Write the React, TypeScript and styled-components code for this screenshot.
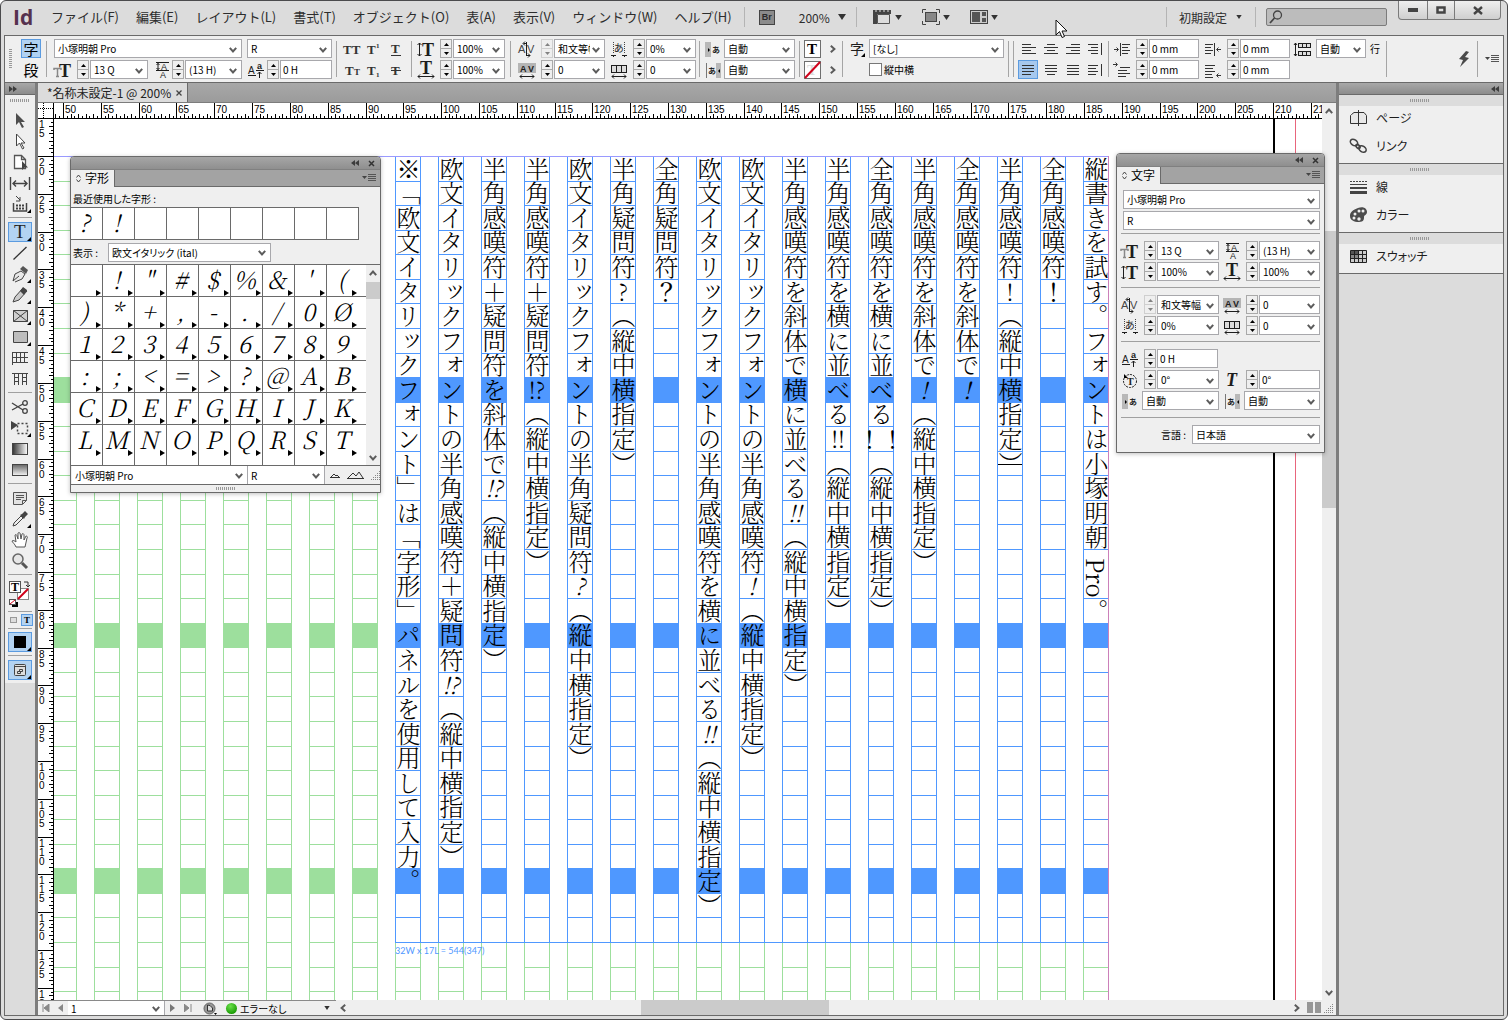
import React from "react";
import styled, { createGlobalStyle, css } from "styled-components";

const ui = `"Noto Sans CJK JP", "Liberation Sans", sans-serif`;
const mincho = `"Noto Serif CJK JP", "Noto Sans CJK JP", serif`;
const serif = `"Liberation Serif", serif`;
const sans = `"Liberation Sans", sans-serif`;
const line = "#6a6a6a";
const face = "#efefef";
const frame = "#dcdcdc";
const blue = "#4f98ff";
const green = "#9ddf9d";

const Global = createGlobalStyle`
  *, *::before, *::after { box-sizing: border-box; }
  html, body { margin: 0; background: #fff; }
  body { font-family: ${ui}; font-size: 10px; color: #000; font-feature-settings: "palt"; overflow: hidden; }
  button, input, select { font: inherit; font-feature-settings: inherit; color: inherit; margin: 0; padding: 0; border: 0; border-radius: 0; background: none; }
  svg { display: block; flex: none; }
`;

/* ---------- window shell ---------- */
const Shell = styled.div`
  position: relative;
  display: flex;
  flex-direction: column;
  height: 100vh;
  border: 1px solid #4b4b4d;
  border-radius: 6px;
  background: ${frame};
  overflow: hidden;
`;
const Work = styled.div`
  flex: 1;
  min-height: 0;
  margin: 0 3px 3px;
  border: 1px solid ${line};
  display: flex;
  flex-direction: column;
`;
const Main = styled.main`
  flex: 1;
  min-height: 0;
  display: flex;
`;
const Splitter = styled.div`
  width: 3px;
  background: #7d7d7d;
`;
const Pointer = styled.svg`
  position: absolute;
  left: 1054px;
  top: 18px;
  z-index: 5;
`;

/* ---------- menu bar ---------- */
const MenuBar = styled.header`
  flex: none;
  display: flex;
  align-items: center;
  height: 34px;
  padding: 0 6px 2px 12px;
  color: #2d2d2d;
`;
const Logo = styled.div`
  width: 38px;
  font: bold 21px/24px "Open Sans", "Liberation Sans", sans-serif;
  color: #56314f;
`;
const Menus = styled.nav`
  display: flex;
  gap: 17px;
`;
const MenuItem = styled.button`
  font-size: 13px;
  line-height: 20px;
  font-feature-settings: normal;
  white-space: nowrap;
`;
const BarLine = styled.span<{ $l: number; $r: number }>`
  width: 1px;
  height: 20px;
  margin: 0 ${(p) => p.$r}px 0 ${(p) => p.$l}px;
  background: #b4b4b4;
`;
const Bridge = styled.button`
  width: 16px;
  height: 15px;
  border: 1px solid #444;
  background: #8b8b8b;
  font: bold 9px/12px ${sans};
  color: #2b2b2b;
`;
const BarButton = styled.button<{ $ml?: number }>`
  display: flex;
  align-items: center;
  gap: 3px;
  margin-left: ${(p) => p.$ml ?? 0}px;
  white-space: nowrap;
`;
const ZoomButton = styled(BarButton)`
  gap: 8px;
  font-size: 12px;
`;
const WorkspaceButton = styled(BarButton)`
  gap: 9px;
  font-size: 12px;
`;
const Spring = styled.span`
  flex: 1;
`;
const Search = styled.label`
  display: flex;
  align-items: center;
  width: 121px;
  height: 18px;
  padding-left: 2px;
  border: 1px solid #7c7c7c;
  border-radius: 2px;
  background: #bcbcbc;
  input {
    flex: 1;
    min-width: 0;
    outline: 0;
  }
`;
const Caption = styled.div`
  align-self: flex-start;
  display: flex;
  height: 19px;
  margin-left: 11px;
  border: 1px solid #7a7a7a;
  border-top: 0;
  border-radius: 0 0 4px 4px;
  background: linear-gradient(#efefef, #cfcfcf);
`;
const CaptionButton = styled.button<{ $w: number }>`
  width: ${(p) => p.$w}px;
  display: grid;
  place-items: center;
  & + & {
    border-left: 1px solid #7a7a7a;
  }
`;

/* ---------- control bar ---------- */
const ControlBar = styled.section`
  flex: none;
  display: flex;
  align-items: flex-start;
  height: 47px;
  padding: 3px 3px 0 4px;
  background: ${face};
  border-bottom: 1px solid ${line};
`;
const Stack = styled.div`
  display: flex;
  flex-direction: column;
  gap: 2px;
`;
const Row = styled.div<{ $gap?: number }>`
  display: flex;
  align-items: center;
  height: 19px;
  gap: ${(p) => p.$gap ?? 0}px;
`;
const Rule = styled.span<{ $l: number; $r: number }>`
  flex: none;
  width: 1px;
  height: 36px;
  margin: 2px ${(p) => p.$r}px 0 ${(p) => p.$l}px;
  background: #a5a5a5;
`;
const DotsV = styled.span`
  width: 3px;
  height: 20px;
  margin: 10px 9px 0 0;
  background: repeating-linear-gradient(#999 0 1px, transparent 1px 2px);
`;
const ModeButton = styled.button<{ $on?: boolean }>`
  width: 20px;
  height: 19px;
  font-size: 15px;
  line-height: 16px;
  border: 1px solid ${(p) => (p.$on ? "#5b9be0" : "transparent")};
  background: ${(p) => (p.$on ? "#b1d1f1" : "none")};
`;
const Toggle = styled.button<{ $on?: boolean }>`
  width: 22px;
  height: 19px;
  display: grid;
  place-items: center;
  color: #333;
  ${(p) =>
    p.$on &&
    css`
      width: 20px;
      margin-right: 2px;
      outline: 1px solid #5b9be0;
      outline-offset: -1px;
      background: #a6c8ee;
    `}
`;
const Swatch = styled.button`
  width: 17px;
  height: 18px;
  border: 1px solid #6f6f6f;
  background: #fff;
  display: grid;
  place-items: center;
`;
const Check = styled.label`
  display: flex;
  align-items: center;
  height: 19px;
  gap: 2px;
  input {
    appearance: none;
    width: 13px;
    height: 13px;
    border: 1px solid #777;
    background: #fff;
  }
`;
const MenuToggle = styled.button`
  height: 16px;
  margin-top: 12px;
`;

/* ---------- fields ---------- */
const Slot = styled.span<{ $w: number }>`
  width: ${(p) => p.$w}px;
  height: 19px;
  display: grid;
  place-items: center;
  flex: none;
`;
const SpinBox = styled.span<{ $dim?: boolean }>`
  display: flex;
  flex-direction: column;
  width: 12px;
  height: 19px;
  margin: 0 1px 0 5px;
  border: 1px solid #a9a9a9;
  opacity: ${(p) => (p.$dim ? 0.45 : 1)};
  button {
    flex: 1;
    display: grid;
    place-items: center;
  }
  button + button {
    border-top: 1px solid #a9a9a9;
  }
`;
const ComboBox = styled.span<{ $w?: number; $bare?: boolean }>`
  position: relative;
  display: block;
  flex: ${(p) => (p.$w ? "none" : 1)};
  width: ${(p) => (p.$w ? p.$w + "px" : "auto")};
  height: ${(p) => (p.$bare ? "100%" : "19px")};
  border: solid #a8a8ac;
  border-width: ${(p) => (p.$bare ? "0 1px 0 0" : "1px")};
  background: #fff;
  select {
    display: block;
    appearance: none;
    width: 100%;
    height: 100%;
    padding: 0 14px 0 3px;
    outline: 0;
    text-overflow: clip;
  }
  svg {
    position: absolute;
    right: 4px;
    top: calc(50% - 2px);
    pointer-events: none;
  }
`;
const TextBox = styled.input<{ $w: number }>`
  &&& {
    width: ${(p) => p.$w}px;
    height: 19px;
    padding: 0 2px;
    outline: 0;
    border: 1px solid #a8a8ac;
    background: #fff;
  }
`;
const MarkBox = styled.svg`
  overflow: visible;
`;

const Chevron = ({ rot = 0 }: { rot?: number }) => (
  <svg width="8" height="6" viewBox="0 0 8 6" style={rot ? { transform: `rotate(${rot}deg)` } : undefined}>
    <path d="M.8.8 4 4.4 7.2.8" fill="none" stroke="#5c5c5c" strokeWidth="2" />
  </svg>
);
const Down = ({ s = 8 }: { s?: number }) => (
  <svg width={s} height={s - 2} viewBox="0 0 8 6">
    <path d="M0 0h8L4 6z" fill="#333" />
  </svg>
);
const Spin = ({ label, dim }: { label: string; dim?: boolean }) => (
  <SpinBox $dim={dim}>
    <button aria-label={`${label} +`}>
      <svg width="5" height="3"><path d="M0 3h5L2.500 0z" /></svg>
    </button>
    <button aria-label={`${label} -`}>
      <svg width="5" height="3"><path d="M0 0h5L2.500 3z" /></svg>
    </button>
  </SpinBox>
);
const Combo = ({ label, value, w, bare }: { label: string; value: string; w?: number; bare?: boolean }) => (
  <ComboBox $w={w} $bare={bare}>
    <select aria-label={label} defaultValue={value}>
      <option>{value}</option>
    </select>
    <Chevron />
  </ComboBox>
);

/* ---------- field icons ---------- */
const T = ({ x, y, s, c = "#1d1d1d", t = "T", w = "bold", f = serif, i }: any) => (
  <text x={x} y={y} fontSize={s} fill={c} fontWeight={w} fontFamily={f} fontStyle={i ? "italic" : undefined}>
    {t}
  </text>
);
const k = "#1d1d1d";
const marks: Record<string, React.ReactNode> = {
  size: (<><path d="M0 9V7.500h7V9M3.500 8v7M2 15.500h3" stroke="#888" strokeWidth="1.500" fill="none" /><T x={5} y={16} s={18} /></>),
  leading: (<><path d="M3 1.500h13M3 9.500h13" stroke={k} /><path d="M5 2v7M3.500 4 5 2.500 6.500 4M3.500 7 5 8.500 6.500 7" stroke={k} fill="none" /><T x={8} y={9} s={9} t="A" f={sans} w="normal" /><T x={7} y={17} s={9} t="A" f={sans} w="normal" /></>),
  baseline: (<><T x={1} y={13} s={10} t="A" f={sans} w="normal" /><T x={10} y={8} s={9} t="a" f={sans} /><path d="M1 14.500h8M9 9.500h8M12.500 17v-6M10.500 13l2-2 2 2" stroke={k} fill="none" /></>),
  vscale: (<><path d="M2.500 3v13M.5 5l2-2 2 2M.5 14l2 2 2-2" stroke={k} fill="none" /><T x={5} y={16} s={18} /></>),
  hscale: (<><T x={3} y={13} s={18} /><path d="M1 15.500h16M3 13.500l-2 2 2 2M15 13.500l2 2-2 2" stroke={k} fill="none" /></>),
  kern: (<><T x={0} y={13} s={11} f={sans} t="A" w="normal" c="#444" /><T x={9} y={13} s={11} f={sans} w="normal" c="#444" t="V" /><path d="M8.500 2v13M5.500 3.500h3M7 1.500l-2 2 2 2M8 15.500h4M10 13.500l2 2-2 2" stroke={k} fill="none" /></>),
  track: (<><rect x="0" y="2" width="18" height="10" fill="#b5b5b5" /><T x={2} y={11} s={9} t="A" f={sans} /><T x={10} y={11} s={9} f={sans} t="V" /><path d="M2 15.500h14M4 13.500l-2 2 2 2M14 13.500l2 2-2 2" stroke={k} fill="none" /></>),
  tsume: (<><path d="M3.500 2v12M14.500 2v12" stroke="#444" strokeDasharray="1 1" /><T x={4} y={12} s={10} t="あ" f={ui} w="normal" /><path d="M1 15.500h5M12 15.500h5M3 17l2-2M15 17l-2-2" stroke={k} /></>),
  aki: (<><rect x="1.500" y="4.500" width="15" height="7" fill="#ddd" stroke={k} /><path d="M6.500 4v7M11.500 4v7" stroke={k} /><path d="M2 15.500h14M4 13.500l-2 2 2 2M14 13.500l2 2-2 2" stroke={k} fill="none" /></>),
  before: (<><rect x="1" y="2" width="6" height="15" fill="#b8b8b8" /><path d="M4 8v4l2-2z" /><T x={8} y={13} s={8} t="あ" f={ui} /></>),
  after: (<><path d="M2.500 2v15" stroke="#777" /><rect x="12" y="2" width="5" height="15" fill="#b8b8b8" /><path d="M16 8v4l-2-2z" /><T x={4} y={13} s={8} t="あ" f={ui} /></>),
  rotate: (<><circle cx="9" cy="10" r="6.500" fill="none" stroke={k} strokeDasharray="2 1" /><T x={6} y={14} s={10} /><path d="M3 3v4h4z" /></>),
  skew: <T x={3} y={15} s={18} i />,
  indL: <path d="M1 9.500h4M3.500 7.500l2 2-2 2M7.500 3v13M9 4.500h8M9 7.500h6M9 10.500h8M9 13.500h6" stroke="#333" fill="none" />,
  indF: <path d="M0 3.500h4M2.500 1.500l2 2-2 2M7 6.500h10M5 9.500h9M5 12.500h12M5 15.500h8" stroke="#333" fill="none" />,
  indR: <path d="M17 9.500h-4M14.500 7.500l-2 2 2 2M10.500 3v13M1 4.500h8M1 7.500h6M1 10.500h8M1 13.500h6" stroke="#333" fill="none" />,
  indE: <path d="M17 14.500h-4M14.500 12.500l-2 2 2 2M1 4.500h10M1 7.500h8M1 10.500h10M1 13.500h7M1 16.500h8" stroke="#333" fill="none" />,
  lines: (<><rect x="4.500" y="3.500" width="12" height="4" fill="#ddd" stroke={k} /><rect x="4.500" y="11.500" width="12" height="4" fill="#ddd" stroke={k} /><path d="M8.500 3v5M12.500 3v5M8.500 11v5M12.500 11v5M1.500 3v13M0 5l1.500-2L3 5M0 14l1.500 2L3 14" stroke={k} fill="none" /></>),
};
const Mark = ({ n }: { n: string }) => (
  <MarkBox width="18" height="18" viewBox="0 0 18 18">{marks[n]}</MarkBox>
);
type FieldProps = { icon: string; label: string; value: string; w: number; iw?: number; plain?: boolean; dim?: boolean };
const Field = ({ icon, label, value, w, iw = 18, plain, dim }: FieldProps) => (
  <Row>
    <Slot $w={iw}><Mark n={icon} /></Slot>
    <Spin label={label} dim={dim} />
    {plain ? <TextBox $w={w} aria-label={label} defaultValue={value} /> : <Combo w={w} label={label} value={value} />}
  </Row>
);

const caseIcons: [string, React.ReactNode][] = [
  ["オールキャップス", <T x={0} y={14} s={13} c="#333" t="TT" />],
  ["上付き", <><T x={2} y={14} s={13} c="#333" /><T x={11} y={8} s={7} c="#333" t="1" /></>],
  ["下線", <><T x={4} y={13} s={13} c="#333" /><path d="M4 15.500h10" stroke="#333" /></>],
  ["スモールキャップス", <><T x={2} y={14} s={13} c="#333" /><T x={11} y={14} s={9} c="#333" /></>],
  ["下付き", <><T x={2} y={14} s={13} c="#333" /><T x={11} y={16} s={7} c="#333" t="1" /></>],
  ["打ち消し線", <><T x={4} y={14} s={13} c="#333" /><path d="M4 9.500h10" stroke="#333" /></>],
];
const alignRows = [
  ["M2 4.500h9M2 7.500h14M2 10.500h9M2 13.500h14", "M5 4.500h8M2 7.500h14M5 10.500h8M2 13.500h14", "M7 4.500h9M2 7.500h14M7 10.500h9M2 13.500h14", "M2 4.500h10M5 7.500h7M2 10.500h10M5 13.500h7M15.500 3v12"],
  ["M3 4.500h12M3 7.500h12M3 10.500h12M3 13.500h9", "M3 4.500h12M3 7.500h12M3 10.500h12M5 13.500h8", "M3 4.500h12M3 7.500h12M3 10.500h12M3 13.500h12", "M2 4.500h10M2 7.500h8M2 10.500h10M2 13.500h8M15.500 3v12"],
];
const BurgerIcon = () => (
  <svg width="15" height="10" viewBox="0 0 15 10">
    <path d="M0 3h5L2.500 6z" fill="#444" />
    <path d="M6 1.500h8M6 3.500h8M6 5.500h8M6 7.500h8" stroke="#555" />
  </svg>
);

const Controls = () => (
  <ControlBar>
    <DotsV />
    <Stack>
      <ModeButton $on>字</ModeButton>
      <ModeButton>段</ModeButton>
    </Stack>
    <Rule $l={5} $r={7} />
    <Stack>
      <Row $gap={5}>
        <Combo w={188} label="フォント" value="小塚明朝 Pro" />
        <Combo w={85} label="スタイル" value="R" />
      </Row>
      <Row $gap={5}>
        <Field icon="size" label="フォントサイズ" value="13 Q" w={58} />
        <Field icon="leading" iw={14} label="行送り" value="(13 H)" w={57} />
        <Field icon="baseline" iw={15} label="ベースライン" value="0 H" w={52} plain />
      </Row>
    </Stack>
    <Rule $l={4} $r={4} />
    <Stack>
      {[0, 3].map((s) => (
        <Row key={s}>
          {caseIcons.slice(s, s + 3).map(([name, art]) => (
            <Toggle key={name} aria-label={name}><MarkBox width="18" height="18" viewBox="0 0 18 18">{art}</MarkBox></Toggle>
          ))}
        </Row>
      ))}
    </Stack>
    <Rule $l={4} $r={5} />
    <Stack>
      <Field icon="vscale" label="垂直比率" value="100%" w={52} />
      <Field icon="hscale" label="水平比率" value="100%" w={52} />
    </Stack>
    <Rule $l={5} $r={7} />
    <Stack>
      <Field icon="kern" label="カーニング" value="和文等幅" w={51} dim />
      <Field icon="track" label="トラッキング" value="0" w={51} />
    </Stack>
    <Slot $w={5} />
    <Stack>
      <Field icon="tsume" label="文字ツメ" value="0%" w={50} />
      <Field icon="aki" label="字取り" value="0" w={50} />
    </Stack>
    <Rule $l={3} $r={4} />
    <Stack>
      <Row $gap={2}><Mark n="before" /><Combo w={71} label="文字前のアキ" value="自動" /></Row>
      <Row $gap={2}><Mark n="after" /><Combo w={71} label="文字後のアキ" value="自動" /></Row>
    </Stack>
    <Rule $l={4} $r={4} />
    <Stack>
      <Row $gap={8}>
        <Swatch aria-label="塗り"><MarkBox width="15" height="16"><T x={2} y={13} s={15} c="#000" /></MarkBox></Swatch>
        <Chevron rot={-90} />
      </Row>
      <Row $gap={8}>
        <Swatch aria-label="線"><MarkBox width="15" height="16"><T x={2} y={13} s={15} c="#ddd" /><path d="M0 16 15 0" stroke="#d0021b" strokeWidth="2" /></MarkBox></Swatch>
        <Chevron rot={-90} />
      </Row>
    </Stack>
    <Rule $l={5} $r={6} />
    <Stack>
      <Row $gap={2}>
        <MarkBox width="18" height="18"><T x={1} y={14} s={14} t="字" f={ui} w="normal" /><path d="M16 13v4h-4z" /></MarkBox>
        <Combo w={135} label="文字スタイル" value="[なし]" />
      </Row>
      <Row>
        <Slot $w={20} />
        <Check><input type="checkbox" />縦中横</Check>
      </Row>
    </Stack>
    <Rule $l={4} $r={4} />
    <Rule $l={0} $r={4} />
    <Stack>
      {alignRows.map((row, r) => (
        <Row key={r}>
          {row.map((d, i) => (
            <Toggle key={i} $on={r === 1 && i === 0} aria-label={`行揃え ${r * 4 + i + 1}`}>
              <svg width="18" height="18"><path d={d} stroke="#333" /></svg>
            </Toggle>
          ))}
        </Row>
      ))}
    </Stack>
    <Rule $l={2} $r={4} />
    <Stack>
      <Field icon="indL" label="左インデント" value="0 mm" w={50} plain />
      <Field icon="indF" label="1行目インデント" value="0 mm" w={50} plain />
    </Stack>
    <Slot $w={5} />
    <Stack>
      <Field icon="indR" label="右インデント" value="0 mm" w={50} plain />
      <Field icon="indE" label="最終行インデント" value="0 mm" w={50} plain />
    </Stack>
    <Slot $w={4} />
    <Row $gap={4}>
      <Mark n="lines" />
      <Combo w={50} label="行取り" value="自動" />
      行
    </Row>
    <Rule $l={6} $r={0} />
    <Spring />
    <MenuToggle aria-label="クイック適用">
      <svg width="12" height="16"><path d="M8 0 1 8l4 1-3 7 9-9-4-1 4-5z" fill="#4a4a4a" /></svg>
    </MenuToggle>
    <Rule $l={7} $r={7} />
    <MenuToggle aria-label="パネルメニュー"><BurgerIcon /></MenuToggle>
  </ControlBar>
);

/* ---------- toolbox ---------- */
const ToolBox = styled.aside`
  width: 30px;
  display: flex;
  flex-direction: column;
  background: ${frame};
`;
const DockHead = styled.div<{ $end?: boolean }>`
  flex: none;
  display: flex;
  align-items: center;
  justify-content: ${(p) => (p.$end ? "flex-end" : "flex-start")};
  height: 12px;
  padding: 0 4px;
  background: linear-gradient(#a8a8a8, #8c8c8c);
  border-bottom: 1px solid ${line};
`;
const Dots = styled.span<{ $v?: number }>`
  display: block;
  flex: none;
  width: 20px;
  height: 3px;
  margin: ${(p) => p.$v ?? 4}px auto;
  background: repeating-linear-gradient(90deg, #999 0 1px, transparent 1px 2px);
`;
const ToolGrip = styled.div`
  height: 14px;
`;
const Tools = styled.div`
  display: flex;
  flex-direction: column;
  align-items: center;
  gap: 1px;
  padding-bottom: 3px;
  background: ${face};
`;
const Tool = styled.button<{ $on?: boolean }>`
  width: 24px;
  height: 20px;
  display: grid;
  place-items: center;
  ${(p) =>
    p.$on &&
    css`
      outline: 1px solid #5b9be0;
      outline-offset: -1px;
      background: #b3d3f2;
    `}
`;
const ToolLine = styled.hr<{ $tight?: boolean }>`
  width: 24px;
  height: 1px;
  margin: 2px 0 ${(p) => (p.$tight ? 2 : 3)}px;
  border: 0;
  background: #a0a0a0;
`;
const MiniTools = styled.div`
  display: flex;
  gap: 4px;
  height: 10px;
  align-items: center;
`;
const MiniTool = styled.button<{ $on?: boolean }>`
  width: 10px;
  height: 10px;
  display: grid;
  place-items: center;
  font: bold 9px/9px ${serif};
  outline: ${(p) => (p.$on ? "1px solid #5b9be0" : "none")};
  background: ${(p) => (p.$on ? "#b3d3f2" : "none")};
`;
const g = "#555";
const corner = <path d="M23 15v4h-4z" fill="#000" />;
const tools: [string, React.ReactNode][] = [
  ["選択", <path d="M8 3v12l3-3 3 6 2-1-3-5h4z" fill="#4e4e4e" />],
  ["ダイレクト選択", <path d="M8.500 3v12l3-3 3 6 1.500-1-3-5h4z" fill="#fff" stroke="#444" />],
  ["ページ", <><path d="M6.500 3.500h7l4 4v9h-11zM13.500 3.500v4h4" fill="#fff" stroke={g} strokeWidth="1.300" /><path d="M14 9v9l2.500-2.500H20z" fill="#444" /></>],
  ["間隔", <path d="M2.500 4v13M21.500 4v13M5 10.500h14M8 7.500l-3 3 3 3M16 7.500l3 3-3 3" fill="none" stroke="#444" strokeWidth="1.400" />],
  ["コンテンツ収集", <><path d="M5.500 9v8h13V9" fill="none" stroke="#444" strokeWidth="1.500" /><path d="M8 11.500h9M8 14.500h9" stroke="#444" strokeDasharray="2 1" strokeWidth="2" /><path d="M8 2l4 4M12 3v4H8" stroke="#444" fill="none" />{corner}</>],
  ["-", null],
  ["文字", <><T x={6} y={16} s={19} w="normal" c="#222" />{corner}</>],
  ["線", <path d="M5.500 16.500 18.500 4" stroke="#333" strokeWidth="1.300" />],
  ["ペン", <><path d="M5 17l2-7 6-3 4 3-3 5-7 3M5 17l6-5" fill="#e8e8e8" stroke="#444" /><path d="m12 5 3-3 5 4-2 4z" fill="#555" />{corner}</>],
  ["鉛筆", <><path d="m5 17 2-5 8-9 4 3-8 9z" fill="#ccc" stroke="#444" /><path d="m12 6 3-4 4 3-3 5z" fill="#444" />{corner}</>],
  ["長方形フレーム", <><path d="M5.500 4.500h14v11h-14zM5.500 4.500l14 11M19.500 4.500l-14 11" fill="#d0d0d0" stroke="#444" />{corner}</>],
  ["長方形", <><path d="M5.500 4.500h14v11h-14z" fill="#bdbdbd" stroke="#444" />{corner}</>],
  ["横組みグリッド", <><path d="M5 4.500h15M5 9.500h15M5 14.500h15" stroke="#444" strokeWidth="1.200" /><path d="M4.500 4v13M8.500 5v4M12.500 5v4M16.500 5v4M8.500 10v4M12.500 10v4M16.500 10v4" stroke="#444" /></>],
  ["縦組みグリッド", <path d="M4 4.500h16M6.500 8.500h4M14.500 8.500h4M6.500 12.500h4M14.500 12.500h4M6.500 5v11M10.500 5v11M14.500 5v11M18.500 5v11" stroke="#444" fill="none" />],
  ["-", null],
  ["はさみ", <><circle cx="17" cy="6" r="2.300" fill="none" stroke="#444" strokeWidth="1.300" /><circle cx="17" cy="14" r="2.300" fill="none" stroke="#444" strokeWidth="1.300" /><path d="M4 6l11 7M4 13l11-6" stroke="#444" strokeWidth="1.400" /></>],
  ["自由変形", <><path d="M3 3v9l7-5z" fill="#444" /><path d="M9.500 5.500h10v10h-10z" fill="none" stroke="#444" strokeDasharray="2 2" strokeWidth="1.500" />{corner}</>],
  ["グラデーション", <rect x="4.500" y="4.500" width="15" height="11" fill="url(#toolRamp)" stroke="#444" />],
  ["ぼかし", <rect x="4.500" y="4.500" width="15" height="11" fill="url(#toolFade)" stroke="#444" />],
  ["-", null],
  ["注釈", <path d="M5.500 4.500h13v8l-4 4h-9zM8 7.500h8M8 9.500h8M8 11.500h5M14.500 16v-3.500h4" fill="#e2e2e2" stroke="#555" />],
  ["スポイト", <><path d="m5 17 1-3 7-7 2 2-7 7z" fill="#eee" stroke="#444" /><path d="m12 6 2-1 3-3 3 3-3 3-1 2z" fill="#444" />{corner}</>],
  ["手のひら", <path d="M8 17c-1-3-4-5-4-6 1-1 3 0 4 1L7 5c1-1 2 0 2 1l1 3V3c1-1 2 0 2 0l1 6 1-5c1-1 2 0 2 1v5l2-4c1 0 2 1 1 2l-2 9z" fill="#fff" stroke="#555" />],
  ["ズーム", <><circle cx="10" cy="8" r="5" fill="#e6e6e6" stroke="#666" strokeWidth="1.500" /><path d="m14 12 5 5" stroke="#555" strokeWidth="3" /></>],
  ["-", null],
];
const Rewind = ({ flip }: { flip?: boolean }) => (
  <svg width="8" height="6" viewBox="0 0 8 6">
    <path d={flip ? "M0 0l4 3-4 3zM4 0l4 3-4 3z" : "M4 0v6L0 3zM8 0v6L4 3z"} fill="#3c3c3c" />
  </svg>
);
const Toolbox = () => (
  <ToolBox>
    <DockHead><Rewind flip /></DockHead>
    <Tools>
      <ToolGrip><Dots /></ToolGrip>
      {tools.map(([name, art], i) =>
        art ? (
          <Tool key={i} aria-label={name} $on={name === "文字"}>
            <MarkBox width="24" height="20">
              {name === "グラデーション" && (
                <defs>
                  <linearGradient id="toolRamp"><stop stopColor="#333" /><stop offset="1" stopColor="#fff" /></linearGradient>
                  <linearGradient id="toolFade" x2="0" y2="1"><stop stopColor="#666" /><stop offset="1" stopColor="#f4f4f4" /></linearGradient>
                </defs>
              )}
              {art}
            </MarkBox>
          </Tool>
        ) : (
          <ToolLine key={i} />
        )
      )}
      <svg width="24" height="29" viewBox="0 -1 24 29">
        <rect x="9.500" y="8.500" width="11" height="11" fill="#fff" stroke="#888" />
        <path d="m10 19 10-10" stroke="#d0021b" strokeWidth="2" />
        <rect x="1.500" y="1.500" width="11" height="11" fill="#fff" stroke="#555" />
        <T x={3} y={11} s={12} c="#000" />
        <path d="M16 2h4v4M18 5l2 2 2-2" fill="none" stroke="#333" />
        <rect x="4" y="22" width="6" height="5" /><rect x="1.500" y="19.500" width="6" height="5" fill="#fff" stroke="#555" />
        <path d="m2 24 5-4" stroke="#d0021b" />
      </svg>
      <ToolLine $tight />
      <MiniTools>
        <MiniTool aria-label="オブジェクトに適用"><svg width="7" height="6"><rect x=".5" y=".5" width="6" height="5" fill="#ddd" stroke="#999" /></svg></MiniTool>
        <MiniTool $on>T</MiniTool>
      </MiniTools>
      <ToolLine $tight />
      <Tool $on aria-label="カラーを適用"><svg width="24" height="20"><rect x="6" y="4" width="12" height="12" />{corner}</svg></Tool>
      <ToolLine />
      <Tool $on aria-label="表示モード"><svg width="24" height="20"><rect x="6.500" y="4.500" width="11" height="11" rx="1" fill="#ddd" stroke="#444" /><path d="M7 6.500h10M9.500 11.500h3v2h-3zM11.500 9.500h3v2h-3z" stroke="#444" fill="none" />{corner}</svg></Tool>
    </Tools>
  </ToolBox>
);

/* ---------- document area ---------- */
const Doc = styled.section`
  flex: 1;
  min-width: 0;
  display: flex;
  flex-direction: column;
`;
const Tabs = styled.div`
  flex: none;
  height: 20px;
  display: flex;
  background: linear-gradient(#a8a8a8, #9b9b9b);
  border-bottom: 1px solid #7c7c7c;
`;
const DocTab = styled.div`
  display: flex;
  align-items: center;
  gap: 5px;
  padding: 0 5px 0 9px;
  font-size: 12px;
  line-height: 19px;
  color: #222;
  background: ${frame};
  border-right: 1px solid ${line};
`;
const Sheet = styled.div`
  flex: 1;
  min-height: 0;
  display: grid;
  grid-template: 16px minmax(0, 1fr) / 16px minmax(0, 1fr) 14px;
`;
const Origin = styled.div`
  border-right: 1px solid #000;
  border-bottom: 1px solid #000;
  background: #fff;
`;
const RulerX = styled.svg`
  width: 100%;
  height: 16px;
  background: #fff;
  border-bottom: 1px solid #000;
`;
const RulerY = styled.svg`
  width: 16px;
  height: 100%;
  background: #fff;
  border-right: 1px solid #000;
`;
const Pasteboard = styled.div`
  position: relative;
  overflow: hidden;
  background: #fff;
`;
const GuideX = styled.i<{ $x: number; $w?: number; $c: string; $top?: number }>`
  position: absolute;
  left: ${(p) => p.$x}px;
  top: ${(p) => p.$top ?? 0}px;
  bottom: 0;
  width: ${(p) => p.$w ?? 1}px;
  background: ${(p) => p.$c};
`;
const TopGuide = styled.i`
  position: absolute;
  left: 0;
  top: 37px;
  width: 1055px;
  height: 1px;
  background: #9a9aff;
`;
const GridFrame = styled.div<{ $x: number; $h: number; $c: string }>`
  position: absolute;
  left: ${(p) => p.$x}px;
  top: 37px;
  height: ${(p) => p.$h}px;
  display: flex;
  flex-direction: row-reverse;
  gap: 17px;
  color: ${(p) => p.$c};
`;
const Frame = styled(GridFrame)`
  box-shadow: 0 1px 0 ${blue};
`;
const Column = styled.div<{ $rows: number }>`
  width: 26px;
  display: grid;
  grid-template-rows: repeat(${(p) => p.$rows}, minmax(0, 1fr));
  border: solid currentColor;
  border-width: 0 1px;
  background: #fff;
`;
const Cell = styled.span<{ $fill?: boolean; $span?: number; $caret?: boolean }>`
  grid-row: span ${(p) => p.$span ?? 1};
  display: flex;
  align-items: center;
  justify-content: center;
  min-width: 0;
  position: relative;
  border-top: 1px solid currentColor;
  background: ${(p) => (p.$fill ? "currentColor" : "transparent")};
  ${(p) =>
    p.$caret &&
    css`
      &::after {
        content: "";
        position: absolute;
        left: 0;
        right: 0;
        top: 12px;
        height: 1px;
        background: #000;
      }
    `}
`;
const Kana = styled.span<{ $strong?: boolean }>`
  writing-mode: vertical-rl;
  font: ${(p) => (p.$strong ? 500 : 300)} 24px/24px ${mincho};
  font-feature-settings: normal;
  color: #000;
`;
const Yoko = styled.span<{ $it?: boolean; $wide?: boolean }>`
  font: ${(p) => (p.$it ? "italic" : "normal")} ${(p) => (p.$wide ? 500 : 300)} 23px/24px ${mincho};
  font-feature-settings: normal;
  white-space: nowrap;
  color: #000;
  z-index: 1;
`;
const Latin = styled.span`
  writing-mode: vertical-rl;
  margin-top: 8px;
  font: 300 24px/24px ${mincho};
  font-feature-settings: normal;
  color: #000;
`;
const FrameInfo = styled.p`
  position: absolute;
  left: 341px;
  top: 825px;
  margin: 0;
  font: 9px/13px Lato, "Open Sans", sans-serif;
  color: ${blue};
`;

type Piece = string | { y: string; it?: boolean; wide?: boolean } | { latin: string };
const note: Piece[] = [..."（縦中横指定）"];
const it = (y: string): Piece => ({ y, it: true });
const up = (y: string): Piece => ({ y });
const columns: Piece[][] = [
  [..."縦書きを試す。フォントは小塚明朝", { latin: "Pro" }, "。"],
  [..."全角感嘆符！"],
  [..."半角感嘆符", up("!"), ...note],
  [..."全角感嘆符を斜体で", { y: "！", it: true, wide: true }],
  [..."半角感嘆符を斜体で", it("!"), ...note],
  [..."全角感嘆符を横に並べる", { y: "！！", wide: true }, ...note],
  [..."半角感嘆符を横に並べる", up("!!"), ...note],
  [..."半角感嘆符を斜体で横に並べる", it("!!"), ...note],
  [..."欧文イタリックフォントの半角感嘆符", it("!"), ...note],
  [..."欧文イタリックフォントの半角感嘆符を横に並べる", it("!!"), ...note],
  [..."全角疑問符？"],
  [..."半角疑問符", up("?"), ...note],
  [..."欧文イタリックフォントの半角疑問符", it("?"), ...note],
  [..."半角感嘆符＋疑問符", up("!?"), ...note],
  [..."半角感嘆符＋疑問符を斜体で", it("!?"), ...note],
  [..."欧文イタリックフォントの半角感嘆符＋疑問符", it("!?"), ...note],
  [..."※「欧文イタリックフォント」は「字形」パネルを使用して入力。"],
];
const TextColumn = ({ pieces, caret }: { pieces: Piece[]; caret?: boolean }) => {
  let row = 0;
  const cells: React.ReactNode[] = pieces.map((p, i) => {
    row += 1;
    const fill = row % 10 === 0;
    if (typeof p === "string")
      return (
        <Cell key={i} $fill={fill} $caret={caret && i === pieces.length - 1}>
          <Kana $strong={p === "！" || p === "？"}>{p}</Kana>
        </Cell>
      );
    if ("latin" in p) {
      row += 1;
      return <Cell key={i} $span={2}><Latin>{p.latin}</Latin></Cell>;
    }
    return <Cell key={i} $fill={fill}><Yoko $it={p.it} $wide={p.wide}>{p.y}</Yoko></Cell>;
  });
  while (row < 32) {
    row += 1;
    cells.push(<Cell key={`e${row}`} $fill={row % 10 === 0} />);
  }
  return <Column $rows={32}>{cells}</Column>;
};

const step = 7.5625;
const ticks = (from: number, to: number) => {
  const out: number[] = [];
  for (let v = from; v <= to; v += 0.5) out.push(v);
  return out;
};
const len = (v: number) => (v % 5 === 0 ? 16 : v % 1 === 0 ? 4 : 2);
const HRuler = () => (
  <RulerX shapeRendering="crispEdges">
    {ticks(49, 217).map((v) => {
      const x = Math.round(9 + (v - 50) * step);
      return (
        <React.Fragment key={v}>
          <rect x={x} y={15 - len(v)} width="1" height={len(v)} />
          {v % 5 === 0 && <text x={x + 2} y="10" fontSize="10" fontFamily={sans}>{v}</text>}
        </React.Fragment>
      );
    })}
  </RulerX>
);
const VRuler = () => (
  <RulerY shapeRendering="crispEdges">
    {ticks(15, 132).map((v) => {
      const y = Math.round(37 + (v - 20) * step);
      return (
        <React.Fragment key={v}>
          <rect x={15 - len(v)} y={y} width={len(v)} height="1" />
          {v % 5 === 0 && (
            <text fontSize="10" fontFamily={sans}>
              {[...String(v)].map((d, i) => <tspan key={i} x="1" y={y + 10 + i * 9}>{d}</tspan>)}
            </text>
          )}
        </React.Fragment>
      );
    })}
  </RulerY>
);

const ScrollY = styled.div`
  grid-column: 3;
  grid-row: 1 / 3;
  display: flex;
  flex-direction: column;
  align-items: center;
  background: ${face};
`;
const ArrowButton = styled.button`
  display: grid;
  place-items: center;
  flex: none;
  width: 14px;
  height: 15px;
`;
const TrackY = styled.div`
  flex: 1;
  width: 100%;
`;
const ThumbY = styled.div<{ $at: string; $size: string }>`
  position: relative;
  top: ${(p) => p.$at};
  height: ${(p) => p.$size};
  background: #cbcbcb;
`;
const StatusBar = styled.footer`
  flex: none;
  display: flex;
  align-items: center;
  height: 15px;
  background: ${face};
`;
const StatusLeft = styled.div`
  display: flex;
  align-items: center;
  width: 298px;
  height: 15px;
  border-top: 1px solid #8a8a8a;
`;
const PageNav = styled.button`
  width: 15px;
  height: 14px;
  display: grid;
  place-items: center;
`;
const Preflight = styled.span`
  width: 11px;
  height: 11px;
  margin: 0 3px 0 9px;
  border-radius: 50%;
  background: radial-gradient(circle at 40% 30%, #6ae04a, #149600 80%);
`;
const TrackX = styled.div`
  flex: 1;
  height: 15px;
`;
const ThumbX = styled.div`
  width: 20%;
  height: 15px;
  margin-left: 31%;
  background: #cbcbcb;
`;

/* ---------- floating panels ---------- */
const Panel = styled.section<{ $x: number; $y: number; $w: number }>`
  position: absolute;
  left: ${(p) => p.$x}px;
  top: ${(p) => p.$y}px;
  width: ${(p) => p.$w}px;
  z-index: 3;
  border: 1px solid ${line};
  border-radius: 4px 4px 0 0;
  background: ${face};
  box-shadow: 0 1px 4px rgba(0, 0, 0, 0.25);
`;
const PanelHead = styled.div`
  display: flex;
  align-items: center;
  justify-content: flex-end;
  gap: 9px;
  height: 13px;
  padding-right: 5px;
  border-bottom: 1px solid #808080;
  border-radius: 3px 3px 0 0;
  background: linear-gradient(#a6a6a6, #8f8f8f);
`;
const PanelTabs = styled.div`
  display: flex;
  justify-content: space-between;
  align-items: center;
  height: 17px;
  padding-right: 3px;
  border-bottom: 1px solid ${line};
  background: #a3a3a3;
`;
const PanelTab = styled.h2`
  display: flex;
  align-items: center;
  gap: 4px;
  height: 17px;
  margin: 0;
  padding: 0 5px;
  font-size: 12px;
  font-weight: normal;
  line-height: 16px;
  border-right: 1px solid ${line};
  background: ${face};
`;
const PanelTop = ({ title }: { title: string }) => (
  <>
    <PanelHead>
      <button aria-label="折りたたむ"><Rewind /></button>
      <button aria-label="閉じる"><svg width="7" height="7"><path d="m1 1 5 5M6 1 1 6" stroke="#333" strokeWidth="1.500" /></svg></button>
    </PanelHead>
    <PanelTabs>
      <PanelTab>
        <svg width="5" height="9"><path d="M.5 3.500 2.500 1l2 2.500M.5 5.500 2.500 8l2-2.500" fill="none" stroke="#444" /></svg>
        {title}
      </PanelTab>
      <button aria-label="パネルメニュー"><BurgerIcon /></button>
    </PanelTabs>
  </>
);
const PanelLabel = styled.p`
  margin: 0;
  padding: 4px 2px 0;
  line-height: 16px;
`;
const RecentGrid = styled.div`
  display: grid;
  grid-template-columns: repeat(9, 32px);
  grid-auto-rows: 32px;
  width: 288px;
  border-top: 1px solid ${line};
`;
const ShowRow = styled.label`
  display: flex;
  align-items: center;
  gap: 10px;
  height: 24px;
  padding: 2px;
`;
const GlyphArea = styled.div`
  display: flex;
  border-top: 1px solid ${line};
  border-bottom: 1px solid ${line};
`;
const GlyphGrid = styled.div`
  flex: 1;
  min-width: 0;
  display: grid;
  grid-template-columns: repeat(8, 32px) 1fr;
  grid-template-rows: repeat(5, 32px) 40px;
  background: #fff;
`;
const GlyphCell = styled.button<{ $alt?: boolean }>`
  &&& {
    position: relative;
    display: flex;
    justify-content: center;
    align-items: flex-start;
    padding-right: 4px;
    border: solid ${line};
    border-width: 0 1px 1px 0;
    background: #fff;
    font: italic 300 24px/28px ${mincho};
    font-feature-settings: normal;
  }
  ${(p) =>
    p.$alt &&
    css`
      &&&:nth-child(9n) {
        padding-right: 10px;
        border-right: 0;
      }
      &&&:nth-child(n + 46) {
        border-bottom: 0;
      }
      &::after {
        content: "";
        position: absolute;
        left: 25px;
        top: 25px;
        border: solid transparent;
        border-width: 3px 0 3px 5px;
        border-left-color: #000;
      }
    `}
`;
const GlyphScroll = styled.div`
  width: 14px;
  display: flex;
  flex-direction: column;
`;
const GlyphFoot = styled.div`
  display: flex;
  align-items: center;
  height: 19px;
  padding-left: 1px;
  border-bottom: 1px solid ${line};
`;
const FootIcons = styled.div`
  display: flex;
  gap: 7px;
  align-items: center;
  padding-left: 5px;
`;
const Grip = () => (
  <svg width="10" height="10">
    <path d="M0 9.500h10M2 7.500h8M4 5.500h6M6 3.500h4M8 1.500h2" stroke="#888" strokeDasharray="1 1" />
  </svg>
);
const glyphs = [" ", ...`!"#$%&'()*+,-./0Ø123456789:;<=>?@ABCDEFGHIJKLMNOPQRST`];

const GlyphPanel = () => (
  <Panel $x={16} $y={37} $w={311}>
    <PanelTop title="字形" />
    <PanelLabel>最近使用した字形 :</PanelLabel>
    <RecentGrid>
      {["?", "!", "", "", "", "", "", "", ""].map((c, i) => <GlyphCell key={i}>{c}</GlyphCell>)}
    </RecentGrid>
    <ShowRow>
      表示 :
      <Combo w={163} label="表示" value="欧文イタリック (ital)" />
    </ShowRow>
    <GlyphArea>
      <GlyphGrid>
        {glyphs.map((c, i) => <GlyphCell key={i} $alt>{c}</GlyphCell>)}
      </GlyphGrid>
      <GlyphScroll>
        <ArrowButton aria-label="上へ"><Chevron rot={180} /></ArrowButton>
        <TrackY><ThumbY $at="1%" $size="17px" /></TrackY>
        <ArrowButton aria-label="下へ"><Chevron /></ArrowButton>
      </GlyphScroll>
    </GlyphArea>
    <GlyphFoot>
      <Combo bare w={176} label="フォント" value="小塚明朝 Pro" />
      <Combo bare w={77} label="スタイル" value="R" />
      <FootIcons>
        <svg width="10" height="6"><path d="M0 5.500h10M1 5l3-3 2 2 1-1 2 2" fill="none" stroke="#333" /></svg>
        <svg width="17" height="8"><path d="M0 7.500h17M1 7l5-5 3 3 3-4 4 6" fill="none" stroke="#333" /></svg>
        <Grip />
      </FootIcons>
    </GlyphFoot>
    <Dots $v={2} />
  </Panel>
);

const CharBody = styled.div`
  display: flex;
  flex-direction: column;
  gap: 2px;
  padding: 6px 4px 8px;
`;
const FontStack = styled.div`
  display: flex;
  flex-direction: column;
  gap: 2px;
  padding-left: 2px;
  & > * {
    flex: none;
  }
`;
const CharLine = styled.hr<{ $t: number }>`
  width: 100%;
  height: 1px;
  margin: ${(p) => p.$t}px 0 5px;
  border: 0;
  background: #a0a0a0;
`;
const LangRow = styled.label`
  display: flex;
  justify-content: flex-end;
  align-items: center;
  gap: 6px;
`;
const CharPanel = () => (
  <Panel $x={1062} $y={34} $w={209}>
    <PanelTop title="文字" />
    <CharBody>
      <FontStack>
        <Combo label="フォント" value="小塚明朝 Pro" />
        <Combo label="スタイル" value="R" />
      </FontStack>
      <CharLine $t={1} />
      <Row $gap={4}>
        <Field icon="size" label="サイズ" value="13 Q" w={62} />
        <Field icon="leading" label="行送り" value="(13 H)" w={61} />
      </Row>
      <Row $gap={4}>
        <Field icon="vscale" label="垂直比率" value="100%" w={62} />
        <Field icon="hscale" label="水平比率" value="100%" w={61} />
      </Row>
      <CharLine $t={4} />
      <Row $gap={4}>
        <Field icon="kern" label="カーニング" value="和文等幅" w={62} dim />
        <Field icon="track" label="トラッキング" value="0" w={61} />
      </Row>
      <Row $gap={4}>
        <Field icon="tsume" label="文字ツメ" value="0%" w={62} />
        <Field icon="aki" label="字取り" value="0" w={61} />
      </Row>
      <CharLine $t={4} />
      <Field icon="baseline" label="ベースライン" value="0 H" w={61} plain />
      <Row $gap={4}>
        <Field icon="rotate" label="文字回転" value="0°" w={62} />
        <Field icon="skew" label="歪み" value="0°" w={61} plain />
      </Row>
      <Row $gap={4}>
        <Row $gap={3}><Mark n="before" /><Combo w={77} label="文字前のアキ" value="自動" /></Row>
        <Row $gap={3}><Mark n="after" /><Combo w={76} label="文字後のアキ" value="自動" /></Row>
      </Row>
      <CharLine $t={5} />
      <LangRow>言語 :<Combo w={128} label="言語" value="日本語" /></LangRow>
    </CharBody>
  </Panel>
);

const Document = () => (
  <Doc>
    <Tabs>
      <DocTab>
        *名称未設定-1 @ 200%
        <button aria-label="タブを閉じる"><svg width="6" height="6"><path d="m.5.5 5 5M5.500.5l-5 5" stroke="#444" strokeWidth="1.300" /></svg></button>
      </DocTab>
    </Tabs>
    <Sheet>
      <Origin>
        <svg width="15" height="15"><path d="M0 5.500h15M5.500 0v15" stroke="#000" strokeDasharray="1 1" /></svg>
      </Origin>
      <HRuler />
      <VRuler />
      <Pasteboard>
        <GridFrame $x={-3} $h={1179} $c={green} aria-hidden>
          {Array.from({ length: 25 }, (_, c) => (
            <Column key={c} $rows={48}>
              {Array.from({ length: 48 }, (_, r) => <Cell key={r} $fill={r % 10 === 9} />)}
            </Column>
          ))}
        </GridFrame>
        <Frame $x={341} $h={786} $c={blue}>
          {columns.map((p, i) => <TextColumn key={i} pieces={p} caret={i === 2} />)}
        </Frame>
        <FrameInfo>32W x 17L = 544(347)</FrameInfo>
        <TopGuide />
        <GuideX $x={1054} $top={37} $c="#cc80ba" />
        <GuideX $x={1219} $w={2} $c="#000" />
        <GuideX $x={1241} $c="#e8657c" />
      </Pasteboard>
      <ScrollY>
        <ArrowButton aria-label="上へ"><Chevron rot={180} /></ArrowButton>
        <TrackY><ThumbY $at="13%" $size="32%" /></TrackY>
        <ArrowButton aria-label="下へ"><Chevron /></ArrowButton>
      </ScrollY>
    </Sheet>
    <StatusBar>
      <StatusLeft>
        <PageNav aria-label="先頭ページ"><svg width="8" height="8"><path d="M1 0v8M7 0v8L2 4z" stroke="#888" fill="#888" /></svg></PageNav>
        <PageNav aria-label="前ページ"><svg width="6" height="8"><path d="M5 0v8L0 4z" fill="#888" /></svg></PageNav>
        <Combo bare w={97} label="ページ" value="1" />
        <PageNav aria-label="次ページ"><svg width="6" height="8"><path d="M0 0v8l5-4z" fill="#777" /></svg></PageNav>
        <PageNav aria-label="最終ページ"><svg width="8" height="8"><path d="M7 0v8M0 0v8l5-4z" stroke="#888" fill="#888" /></svg></PageNav>
        <Slot $w={8} />
        <svg width="14" height="13"><circle cx="6.500" cy="6.500" r="5.500" fill="#999" stroke="#666" /><path d="M4.500 3v6h5V6L7 3.500z" fill="#ddd" stroke="#333" /><path d="M11 11h3l-1.500 2z" /></svg>
        <Preflight />
        エラーなし
        <Spring />
        <Down s={6} />
        <Slot $w={6} />
      </StatusLeft>
      <ArrowButton aria-label="左へ"><Chevron rot={90} /></ArrowButton>
      <TrackX><ThumbX /></TrackX>
      <ArrowButton aria-label="右へ"><Chevron rot={-90} /></ArrowButton>
      <svg width="20" height="13"><path d="M3 1h6v11H3zM11 1h6v11h-6z" fill="#979797" /></svg>
      <Grip />
      <Slot $w={2} />
    </StatusBar>
  </Doc>
);

/* ---------- right dock ---------- */
const Dock = styled.aside`
  width: 164px;
  background: ${frame};
`;
const DockSection = styled.section`
  padding-bottom: 1px;
  border-bottom: 1px solid ${line};
  background: ${face};
`;
const DockGrip = styled.div`
  height: 11px;
  padding-left: 71px;
  overflow: hidden;
  background: ${frame};
  & > * {
    margin-left: 0;
  }
`;
const DockItem = styled.button`
  &&& {
    display: flex;
    align-items: center;
    gap: 8px;
    width: 100%;
    height: 28px;
    padding: 0 0 5px 10px;
    font-size: 12px;
    color: #1d1d1d;
  }
`;
const dock: [string, React.ReactNode][][] = [
  [
    ["ページ", <path d="M9.500 1v16M2.500 5.500 5 3.500h4.500v11h-8v-8zM17.500 6.500v8h-8v-11H15z" fill="#e8e8e8" stroke="#333" />],
    ["リンク", <g fill="none" stroke="#444" strokeWidth="1.600"><ellipse cx="5" cy="5.500" rx="4" ry="2.800" transform="rotate(35 5 5.500)" /><ellipse cx="9" cy="9.500" rx="2.500" ry="1.500" transform="rotate(45 9 9.500)" /><ellipse cx="13.500" cy="12" rx="4" ry="2.800" transform="rotate(35 13.500 12)" /></g>],
  ],
  [
    ["線", <><path d="M1 3.500h17" stroke="#444" strokeDasharray="2 1" /><path d="M1 6.500h17" stroke="#444" /><path d="M1 10h17" stroke="#444" strokeWidth="2" /><path d="M1 14.500h17" stroke="#444" strokeWidth="3" /></>],
    ["カラー", <><path d="M9 2c6-2 9 1 9 4s-3 3-3 5 0 5-5 5-9-2-9-6 3-6 8-8z" fill="#4c4c4c" /><g fill="#eee"><circle cx="10" cy="5" r="1.500" /><circle cx="14" cy="5" r="1.500" /><circle cx="6" cy="8" r="1.500" /><circle cx="5" cy="12" r="1.500" /><circle cx="10" cy="13" r="1.700" /></g></>],
  ],
  [
    ["スウォッチ", <><path d="M1.500 3.500h16v12h-16z" fill="#ccc" stroke="#222" /><path d="M2 4h7v4H2z" fill="#555" /><path d="M2 8h7v4H2z" fill="#888" /><path d="M1 7.500h17M1 11.500h17M5.500 3v13M9.500 3v13M13.500 3v13" stroke="#222" /></>],
  ],
];
const RightDock = () => (
  <Dock>
    <DockHead $end><Rewind /></DockHead>
    {dock.map((items, i) => (
      <DockSection key={i}>
        <DockGrip><Dots /></DockGrip>
        {items.map(([name, art]) => (
          <DockItem key={name}><svg width="19" height="18">{art}</svg>{name}</DockItem>
        ))}
      </DockSection>
    ))}
  </Dock>
);

/* Panels float above the canvas, rulers and scroll bars. */
const PanelLayer = styled.div`
  position: absolute;
  left: 53px;
  top: 118px;
`;

const menus = ["ファイル(F)", "編集(E)", "レイアウト(L)", "書式(T)", "オブジェクト(O)", "表(A)", "表示(V)", "ウィンドウ(W)", "ヘルプ(H)"];

export default function App() {
  return (
    <Shell>
      <Global />
      <MenuBar>
        <Logo>Id</Logo>
        <Menus>{menus.map((m) => <MenuItem key={m}>{m}</MenuItem>)}</Menus>
        <BarLine $l={12} $r={14} />
        <Bridge>Br</Bridge>
        <ZoomButton $ml={24}>200%<Down /></ZoomButton>
        <BarLine $l={10} $r={15} />
        <BarButton aria-label="表示オプション">
          <svg width="20" height="16"><path d="M1 1h18v4H1zM1 5h4v10H1z" fill="#444" /><path d="M5.500 5.500h12v9h-12z" fill="#ddd" stroke="#555" /><path d="M4 1v2M8 1v2M12 1v2M16 1v2" stroke="#ddd" /></svg>
          <Down s={7} />
        </BarButton>
        <BarButton $ml={20} aria-label="スクリーンモード">
          <svg width="18" height="16"><path d="M4 .5H.5V4M14 .5h3.500V4M4 15.500H.5V12M14 15.500h3.500V12" fill="none" stroke="#444" /><rect x="3.500" y="3.500" width="11" height="9" fill="#888" stroke="#444" /></svg>
          <Down s={7} />
        </BarButton>
        <BarButton $ml={20} aria-label="ドキュメントレイアウト">
          <svg width="18" height="16"><rect x=".5" y="1.500" width="17" height="13" fill="#ccc" stroke="#444" /><path d="M2 3h8v10H2zM12 3h4v4h-4zM12 9h4v4h-4z" fill="#555" /></svg>
          <Down s={7} />
        </BarButton>
        <Spring />
        <BarLine $l={0} $r={12} />
        <WorkspaceButton>初期設定<Down s={6} /></WorkspaceButton>
        <BarLine $l={13} $r={10} />
        <Search aria-label="検索">
          <svg width="14" height="14"><circle cx="8.500" cy="5" r="4" fill="none" stroke="#444" strokeWidth="1.300" /><path d="m1 13 4.500-5" stroke="#444" strokeWidth="1.800" /></svg>
          <input type="text" />
        </Search>
        <Caption>
          <CaptionButton $w={28} aria-label="最小化"><svg width="10" height="4"><rect width="10" height="4" fill="#444" /></svg></CaptionButton>
          <CaptionButton $w={27} aria-label="最大化"><svg width="10" height="8"><rect x="1.500" y="1.500" width="7" height="5" fill="none" stroke="#444" strokeWidth="2.500" /></svg></CaptionButton>
          <CaptionButton $w={46} aria-label="閉じる"><svg width="10" height="9"><path d="m1 1 8 7M9 1 1 8" stroke="#444" strokeWidth="2.400" /></svg></CaptionButton>
        </Caption>
      </MenuBar>
      <Work>
        <Controls />
        <Main>
          <Toolbox />
          <Splitter />
          <Document />
          <Splitter />
          <RightDock />
        </Main>
      </Work>
      <Pointer width="13" height="20" viewBox="0 0 13 20">
        <path d="M1 1v15l3.500-3.500L7 18.500l2.500-1L7 12h5z" fill="#fff" stroke="#111" />
      </Pointer>
      <PanelLayer>
        <GlyphPanel />
        <CharPanel />
      </PanelLayer>
    </Shell>
  );
}
